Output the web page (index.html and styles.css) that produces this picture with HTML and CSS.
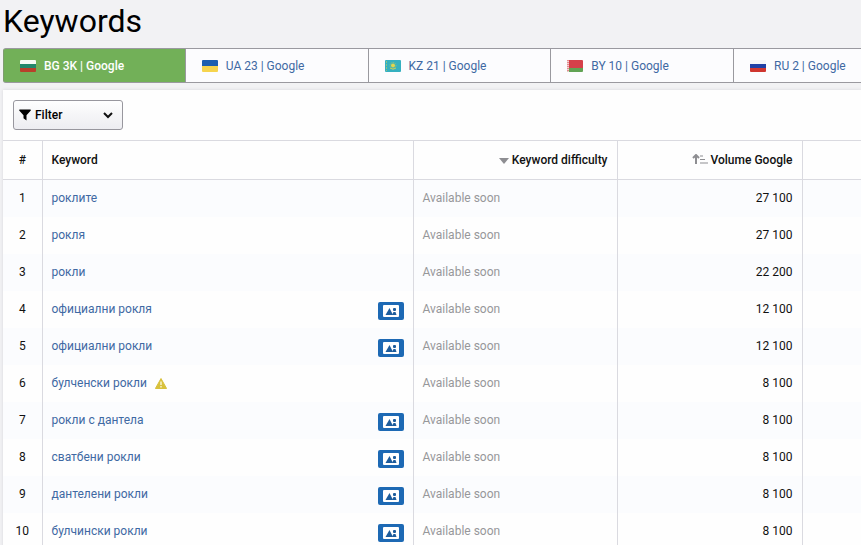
FILE: index.html
```html
<!DOCTYPE html>
<html lang="en">
  <head>
    <meta charset="UTF-8" />
    <meta name="viewport" content="width=device-width, initial-scale=1.0" />
    <title>Keywords</title>
    <link rel="stylesheet" href="styles.css">
  </head>
  <body>
    <svg class="sprite" aria-hidden="true">
      <symbol id="picture" viewBox="0 0 26 18">
        <rect width="26" height="18" rx="2" fill="#1d69b4" />
        <rect x="5" y="3" width="16" height="12" rx="1" fill="#fff" />
        <path d="M7.500 13L11.500 6l3.500 7z" fill="#1d5c9c" />
        <path d="M14 13l1.500-3h2l1 3z" fill="#1d5c9c" />
        <rect x="15" y="6" width="3" height="3" rx="1" fill="#1d5c9c" />
      </symbol>
    </svg>

    <h1>Keywords</h1>

    <nav class="tabs" aria-label="Search engines">
      <a class="tab active" href="#bg">
        <svg class="flag" viewBox="0 0 16 12"><rect width="16" height="4" fill="#f6fbf5" /><rect y="4" width="16" height="4" fill="#23876b" /><rect y="8" width="16" height="4" fill="#b8402a" /></svg>
        BG 3K | Google
      </a>
      <a class="tab" href="#ua">
        <svg class="flag" viewBox="0 0 16 12"><rect width="16" height="6" fill="#1d5fb0" /><rect y="6" width="16" height="6" fill="#f6d44e" /></svg>
        UA 23 | Google
      </a>
      <a class="tab" href="#kz">
        <svg class="flag" viewBox="0 0 16 12"><rect width="16" height="12" fill="#35b0c0" /><path d="M1.5 1v10" stroke="#8cc083" stroke-dasharray="2 1" /><circle cx="8" cy="5.5" r="3" fill="none" stroke="#9fc96b" stroke-dasharray="1 1" /><circle cx="8" cy="5.5" r="2" fill="#e3d54b" /><path d="M5 8q3 2.500 6 0" fill="none" stroke="#c9cf55" /></svg>
        KZ 21 | Google
      </a>
      <a class="tab" href="#by">
        <svg class="flag" viewBox="0 0 16 12"><rect width="16" height="8" fill="#d5404a" /><rect y="8" width="16" height="4" fill="#61a354" /><rect width="2" height="12" fill="#f3d3d3" /><path d="M1 0v12" stroke="#d5404a" stroke-dasharray="1 1" /></svg>
        BY 10 | Google
      </a>
      <a class="tab" href="#ru">
        <svg class="flag" viewBox="0 0 16 12"><rect width="16" height="4" fill="#f5f5f8" /><rect y="4" width="16" height="4" fill="#1f3fa5" /><rect y="8" width="16" height="4" fill="#cf352f" /></svg>
        RU 2 | Google
      </a>
    </nav>

    <main class="panel">
      <div class="toolbar">
        <button class="filter" type="button">
          <svg class="funnel" viewBox="0 0 12 12"><path d="M.6.6h10.800q.8.500.2 1.200L7.500 6.200v5.200L4.500 9.300V6.200L.4 1.800Q-.1 1 .6.600z" /></svg>
          Filter
          <svg class="chevron" viewBox="0 0 10 8"><path d="M1 2l4 4 4-4" /></svg>
        </button>
      </div>

      <table>
        <colgroup>
          <col class="col-num" />
          <col />
          <col class="col-difficulty" />
          <col class="col-volume" />
          <col class="col-rest" />
        </colgroup>
        <thead>
          <tr>
            <th class="num">#</th>
            <th>Keyword</th>
            <th class="right">
              <svg class="sort" viewBox="0 0 10 6"><path d="M0 0h10L5 6z" /></svg>
              Keyword difficulty
            </th>
            <th class="right">
              <svg class="sort-amount" viewBox="0 0 16 10"><path d="M4 10V1M1 4l3-3 3 3" /><path class="bars" d="M8 2h3M8 5.500h5M8 9h8" /></svg>
              Volume Google
            </th>
            <th></th>
          </tr>
        </thead>
        <tbody>
          <tr>
            <td class="num">1</td>
            <td><div class="keyword"><a href="#k1">роклите</a></div></td>
            <td class="soon">Available soon</td>
            <td class="right">27 100</td>
            <td></td>
          </tr>
          <tr>
            <td class="num">2</td>
            <td><div class="keyword"><a href="#k2">рокля</a></div></td>
            <td class="soon">Available soon</td>
            <td class="right">27 100</td>
            <td></td>
          </tr>
          <tr>
            <td class="num">3</td>
            <td><div class="keyword"><a href="#k3">рокли</a></div></td>
            <td class="soon">Available soon</td>
            <td class="right">22 200</td>
            <td></td>
          </tr>
          <tr>
            <td class="num">4</td>
            <td><div class="keyword"><a href="#k4">официални рокля</a><svg class="picture"><use href="#picture" /></svg></div></td>
            <td class="soon">Available soon</td>
            <td class="right">12 100</td>
            <td></td>
          </tr>
          <tr>
            <td class="num">5</td>
            <td><div class="keyword"><a href="#k5">официални рокли</a><svg class="picture"><use href="#picture" /></svg></div></td>
            <td class="soon">Available soon</td>
            <td class="right">12 100</td>
            <td></td>
          </tr>
          <tr>
            <td class="num">6</td>
            <td>
              <div class="keyword">
                <a href="#k6">булченски рокли</a>
                <svg class="warning" viewBox="0 0 12 11"><path d="M6 .5L11.600 10.500H.4z" fill="#d8c13c" stroke="#d8c13c" stroke-linejoin="round" /><path d="M6 3.500v3.500M6 8v1.500" stroke="#fbf6d8" stroke-width="1.400" /></svg>
              </div>
            </td>
            <td class="soon">Available soon</td>
            <td class="right">8 100</td>
            <td></td>
          </tr>
          <tr>
            <td class="num">7</td>
            <td><div class="keyword"><a href="#k7">рокли с дантела</a><svg class="picture"><use href="#picture" /></svg></div></td>
            <td class="soon">Available soon</td>
            <td class="right">8 100</td>
            <td></td>
          </tr>
          <tr>
            <td class="num">8</td>
            <td><div class="keyword"><a href="#k8">сватбени рокли</a><svg class="picture"><use href="#picture" /></svg></div></td>
            <td class="soon">Available soon</td>
            <td class="right">8 100</td>
            <td></td>
          </tr>
          <tr>
            <td class="num">9</td>
            <td><div class="keyword"><a href="#k9">дантелени рокли</a><svg class="picture"><use href="#picture" /></svg></div></td>
            <td class="soon">Available soon</td>
            <td class="right">8 100</td>
            <td></td>
          </tr>
          <tr>
            <td class="num">10</td>
            <td><div class="keyword"><a href="#k10">булчински рокли</a><svg class="picture"><use href="#picture" /></svg></div></td>
            <td class="soon">Available soon</td>
            <td class="right">8 100</td>
            <td></td>
          </tr>
        </tbody>
      </table>
    </main>
  </body>
</html>
```
FILE: styles.css
```css
* {
  box-sizing: border-box;
}

body {
  margin: 0;
  padding-left: 3px;
  background: #f2f2f4;
  color: #111;
  font-family: Roboto, "Liberation Sans", sans-serif;
  font-size: 12px;
  line-height: 16px;
}

a {
  color: #3f69a3;
  text-decoration: none;
}

.sprite {
  display: none;
}

h1 {
  margin: 0;
  padding-bottom: 6px;
  color: #000;
  font-size: 32px;
  font-weight: 400;
  line-height: 42px;
}

/* search engine tabs, the row runs off the right edge */
.tabs {
  display: flex;
  overflow: hidden;
}

.tab {
  flex: 0 0 21.3%;
  display: flex;
  align-items: center;
  gap: 8px;
  height: 35px;
  padding-left: 16px;
  border: 1px solid #9a999f;
  border-left: 0;
  background: #fcfcfe;
}

.tab.active {
  border-left: 1px solid #7f9c70;
  border-radius: 3px 0 0 3px;
  background: #72b058;
  color: #fff;
  font-weight: 500;
}

.flag {
  width: 16px;
  height: 12px;
  border-radius: 1px;
}

.panel {
  margin-top: 7px;
  background: #fefefe;
  box-shadow: 0 0 3px #d5d5da;
}

.toolbar {
  padding: 10px;
}

.filter {
  display: flex;
  align-items: center;
  gap: 4px;
  width: 110px;
  height: 30px;
  padding: 0 9px 0 5px;
  border: 1px solid #98979e;
  border-radius: 3px;
  background: linear-gradient(#fefefe, #ededf1);
  color: #000;
  font: inherit;
  font-weight: 500;
}

.funnel {
  width: 12px;
  height: 12px;
}

.chevron {
  width: 10px;
  height: 8px;
  margin-left: auto;
  fill: none;
  stroke: #111;
  stroke-width: 2;
}

table {
  width: 100%;
  table-layout: fixed;
  border-collapse: collapse;
}

.col-num {
  width: 39px;
}

.col-difficulty {
  width: 204px;
}

.col-volume {
  width: 185px;
}

.col-rest {
  width: 59px;
}

th,
td {
  height: 37px;
  padding: 0 9px;
  border-right: 1px solid #dadae0;
  text-align: left;
}

th:last-child,
td:last-child {
  border-right: 0;
}

th {
  height: 39px;
  border-top: 1px solid #dadae0;
  border-bottom: 1px solid #dadae0;
  font-weight: 500;
}

tbody tr:nth-child(odd) {
  background: #fbfcfe;
}

.num {
  padding: 0;
  text-align: center;
}

.right {
  text-align: right;
}

.soon {
  color: #97979a;
}

.keyword {
  display: flex;
  align-items: center;
  gap: 8px;
}

.picture {
  width: 26px;
  height: 18px;
  margin: 4px 0 0 auto;
}

.warning {
  width: 12px;
  height: 11px;
}

.sort {
  width: 10px;
  height: 6px;
  fill: #8e8e92;
}

.sort-amount {
  width: 16px;
  height: 10px;
  fill: none;
  stroke: #8e8e92;
  stroke-width: 2;
}

.sort-amount .bars {
  stroke-width: 1;
}
```
